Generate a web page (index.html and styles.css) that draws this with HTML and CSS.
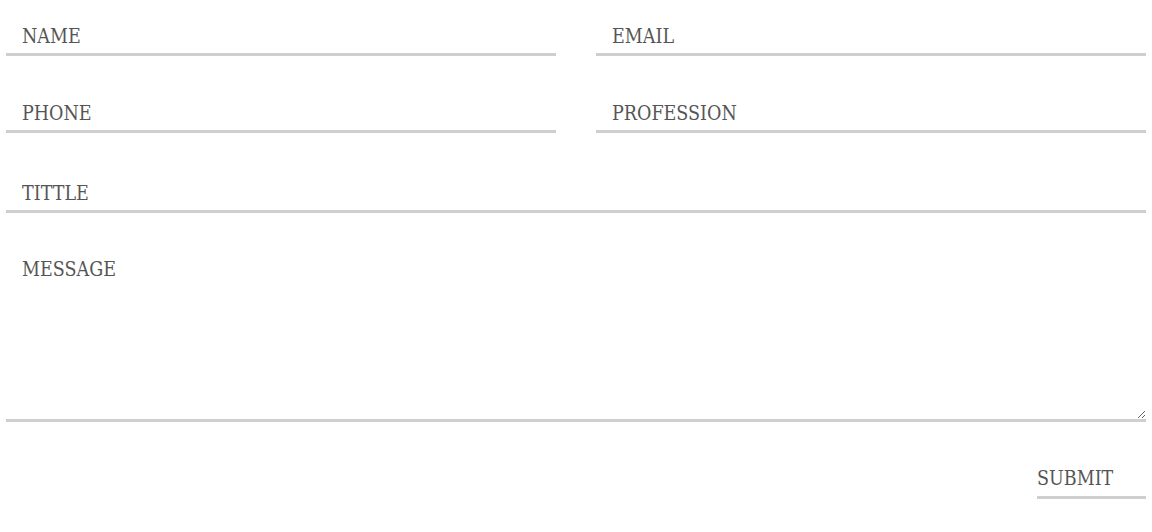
FILE: index.html
```html
<!DOCTYPE html>
<html>
<head>
<meta charset="utf-8">
<link rel="stylesheet" href="styles.css">
</head>
<body>
<form class="contact-form">
  <div class="row two">
    <input class="field" type="text" placeholder="NAME">
    <input class="field" type="email" placeholder="EMAIL">
  </div>
  <div class="row two">
    <input class="field" type="text" placeholder="PHONE">
    <input class="field" type="text" placeholder="PROFESSION">
  </div>
  <div class="row full">
    <input class="field" type="text" placeholder="TITTLE">
  </div>
  <div class="row message">
    <textarea class="field area" placeholder="MESSAGE"></textarea>
  </div>
  <div class="row actions">
    <button class="submit" type="button">SUBMIT</button>
  </div>
</form>
</body>
</html>
```
FILE: styles.css
```css
html, body {
  margin: 0;
  padding: 0;
  background: #ffffff;
}

.contact-form {
  display: flex;
  flex-direction: column;
  padding: 20px 6px 0 6px;
  font-family: "DejaVu Serif Condensed", "DejaVu Serif", serif;
}

.row {
  display: flex;
}

.row.two {
  gap: 40px;
}

.row + .row {
  margin-top: 41px;
}

.row.full {
  margin-top: 44px;
}

.row.message {
  margin-top: 40px;
}

.row.actions {
  justify-content: flex-end;
  margin-top: 47px;
}

.field {
  flex: 1 1 0;
  min-width: 0;
  box-sizing: border-box;
  height: 36px;
  margin: 0;
  padding: 0 16px;
  border: none;
  border-bottom: 3px solid #cfcfcf;
  background: transparent;
  outline: none;
  font-family: "DejaVu Serif Condensed", "DejaVu Serif", serif;
  font-size: 19.5px;
  color: #555555;
}

.field::placeholder {
  color: #555555;
  opacity: 1;
}

.area {
  height: 169px;
  padding: 7px 16px;
  line-height: 20px;
  resize: vertical;
}

.submit {
  box-sizing: border-box;
  width: 109px;
  margin: 0;
  padding: 0 0 7px 0;
  border: none;
  border-bottom: 3px solid #cfcfcf;
  background: transparent;
  text-align: left;
  font-family: "DejaVu Serif Condensed", "DejaVu Serif", serif;
  font-size: 19.5px;
  line-height: 20px;
  color: #555555;
  cursor: pointer;
}
```
